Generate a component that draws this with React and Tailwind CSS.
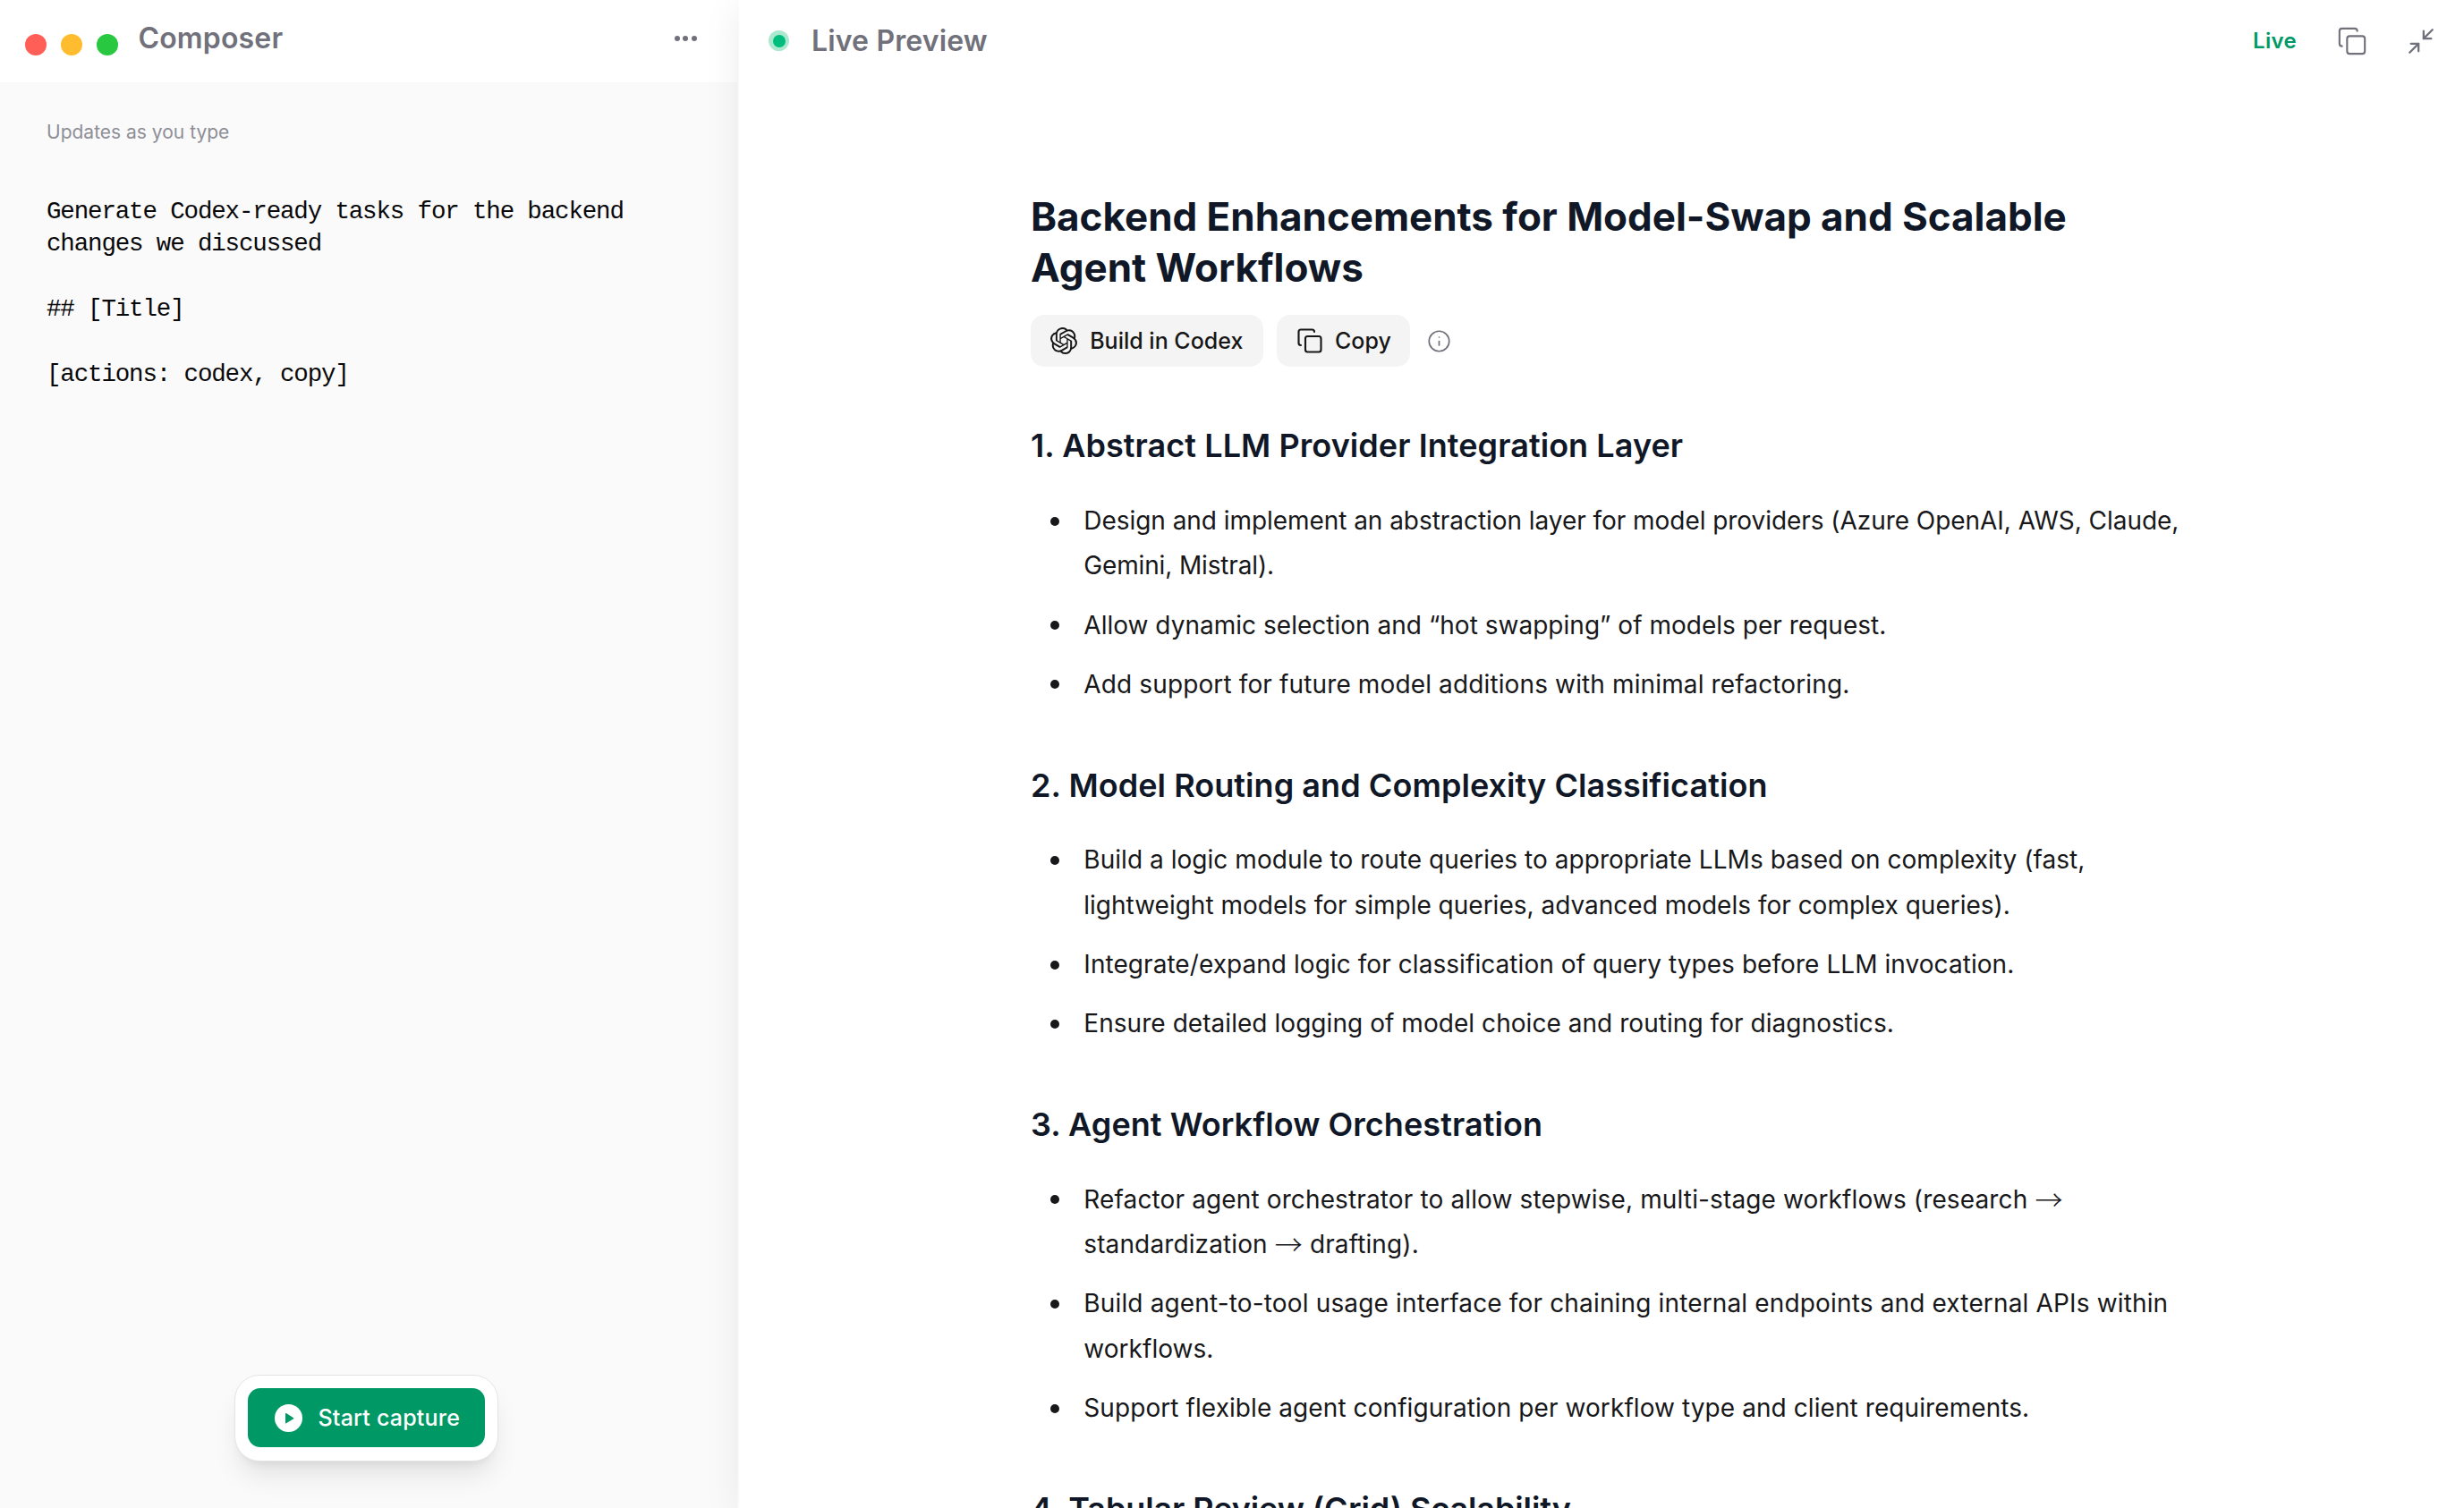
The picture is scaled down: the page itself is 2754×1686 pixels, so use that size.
// src/App.jsx
import React from 'react';
import { Copy, Info, Minimize2 } from 'lucide-react';
import { SiOpenai } from 'react-icons/si';

// Every bullet is a list of [text, tracking] lines
const sections = [
  {
    title: '1. Abstract LLM Provider Integration Layer',
    items: [
      [
        ['Design and implement an abstraction layer for model providers (Azure OpenAI, AWS, Claude,', 'tracking-[-0.05px]'],
        ['Gemini, Mistral).', 'tracking-[-0.15px]'],
      ],
      [['Allow dynamic selection and “hot swapping” of models per request.', 'tracking-[0.02px]']],
      [['Add support for future model additions with minimal refactoring.', 'tracking-[0.13px]']],
    ],
  },
  {
    title: '2. Model Routing and Complexity Classification',
    items: [
      [
        ['Build a logic module to route queries to appropriate LLMs based on complexity (fast,', 'tracking-[0.04px]'],
        ['lightweight models for simple queries, advanced models for complex queries).', 'tracking-[0px]'],
      ],
      [['Integrate/expand logic for classification of query types before LLM invocation.', 'tracking-[0.06px]']],
      [['Ensure detailed logging of model choice and routing for diagnostics.', 'tracking-[0.05px]']],
    ],
  },
  {
    title: '3. Agent Workflow Orchestration',
    items: [
      [
        ['Refactor agent orchestrator to allow stepwise, multi-stage workflows (research →', 'tracking-[0.13px]'],
        ['standardization → drafting).', 'tracking-[0.12px]'],
      ],
      [
        ['Build agent-to-tool usage interface for chaining internal endpoints and external APIs within', 'tracking-[0.15px]'],
        ['workflows.', 'tracking-[0.04px]'],
      ],
      [['Support flexible agent configuration per workflow type and client requirements.', 'tracking-[0.08px]']],
    ],
  },
  {
    title: '4. Tabular Review (Grid) Scalability',
    tracking: 'tracking-[-0.1px]',
    items: [],
  },
];

const prompt = `Generate Codex-ready tasks for the backend
changes we discussed

## [Title]

[actions: codex, copy]`;

const Line = ({ text, tracking }) => (
  <span className={`block whitespace-nowrap ${tracking}`}>
    {text.split(/(→)/).map((part, i) =>
      part === '→' ? (
        <span key={i} className="relative top-[2px] font-['Noto_Sans_CJK_SC',sans-serif] text-[31px] leading-none font-light">→</span>
      ) : (
        part
      )
    )}
  </span>
);

const Section = ({ title, tracking = 'tracking-[0.06px]', items }) => (
  <section className="mt-[64.6px]">
    <h2 className={`text-[36px] leading-[46px] font-semibold text-[#101828] whitespace-nowrap ${tracking}`}>{title}</h2>
    <ul className="mt-[35.6px] flex flex-col gap-[15.8px]">
      {items.map((lines) => (
        <li key={lines[0][0]} className="flex pl-[22px] text-[28px] leading-[50.4px] text-[#18181b]">
          <span className="mt-[20.6px] mr-[27.3px] size-[10px] shrink-0 rounded-full bg-[#18181b]" />
          <div>
            {lines.map(([text, t]) => (
              <Line key={text} text={text} tracking={t} />
            ))}
          </div>
        </li>
      ))}
    </ul>
  </section>
);

const Composer = () => (
  <aside className="flex w-[824px] shrink-0 flex-col bg-[#fafafa]">
    {/* Title bar */}
    <header className="flex h-[92px] shrink-0 items-center bg-white pb-[7px] pl-7 pr-[45px]">
      <div className="mt-[15px] flex gap-4">
        <span className="size-6 rounded-full bg-[#ff5f57]" />
        <span className="size-6 rounded-full bg-[#febc2e]" />
        <span className="size-6 rounded-full bg-[#28c840]" />
      </div>
      <h1 className="ml-[22.5px] text-[32px] leading-10 font-semibold tracking-[0.15px] text-[#71717b]">Composer</h1>
      <button type="button" className="ml-auto flex gap-[3.6px]">
        <span className="size-1.5 rounded-full bg-[#71717b]" />
        <span className="size-1.5 rounded-full bg-[#71717b]" />
        <span className="size-1.5 rounded-full bg-[#71717b]" />
      </button>
    </header>

    {/* Prompt */}
    <div className="pl-[52px] pt-[41px]">
      <p className="text-[21px] leading-[30px] text-[#8e8e97]">Updates as you type</p>
      <pre className="mt-[55.7px] font-['Liberation_Mono',monospace] text-[27.5px] leading-[36.55px] tracking-[-1.15px] text-[#09090b]">{prompt}</pre>
    </div>

    {/* Capture button */}
    <div className="mb-[52px] ml-[262px] mt-auto flex h-[97px] w-[295px] items-start justify-center rounded-[28px] border border-[#e4e4e7] bg-white pt-[14px] shadow-[0_20px_30px_-6px_rgba(0,0,0,0.1),0_8px_12px_-8px_rgba(0,0,0,0.1)]">
      <button type="button" className="flex h-[66px] w-[265px] items-center rounded-[14px] bg-[#009966] pl-[30px] text-white">
        <svg viewBox="0 0 31 31" className="size-[31px] shrink-0">
          <circle cx="15.5" cy="15.5" r="15.5" fill="currentColor" />
          <path d="M12.6 10.6v10.2l8.2-5.1z" fill="#009966" stroke="#009966" strokeWidth="1.2" strokeLinejoin="round" />
        </svg>
        <span className="ml-[17.5px] whitespace-nowrap text-[25px] leading-8 font-medium tracking-[0.2px]">Start capture</span>
      </button>
    </div>
  </aside>
);

const Preview = () => (
  <main className="relative ml-0.5 min-w-0 flex-1 bg-white shadow-[0_8px_40px_rgba(0,0,0,0.08)]">
    <header className="flex h-[91px] items-center pl-[33px] pr-[31.5px] text-[#71717b]">
      <span className="flex size-[23px] items-center justify-center rounded-full bg-[#aae9d0]">
        <span className="size-[14px] rounded-full bg-[#00bc7d]" />
      </span>
      <h1 className="ml-[25px] text-[32px] leading-10 font-semibold tracking-[0.15px]">Live Preview</h1>
      <span className="ml-auto text-[24px] leading-8 font-semibold tracking-[0.3px] text-[#009966]">Live</span>
      <Copy className="ml-[45px] size-[34px]" strokeWidth={1.5} />
      <Minimize2 className="ml-[42.5px] size-[34px]" strokeWidth={1.6} />
    </header>

    <article className="pl-[326px] pt-[122.5px]">
      <h1 className="text-[44px] leading-[57.6px] font-bold tracking-[-0.03px] text-[#101828]">
        Backend Enhancements for Model-Swap and Scalable
        <br />
        Agent Workflows
      </h1>
      <div className="mt-[23.8px] mb-[65.6px] flex h-[57.4px] items-center text-[25px] font-medium text-[#171717]">
        <button type="button" className="flex h-full w-[260px] items-center rounded-[15px] bg-[#f4f4f4] pl-[21.7px]">
          <SiOpenai className="size-[30px] shrink-0" />
          <span className="ml-[14.5px] mt-[2px] whitespace-nowrap">Build in Codex</span>
        </button>
        <button type="button" className="ml-[15px] flex h-full w-[149px] items-center rounded-[15px] bg-[#f4f4f4] pl-[21.5px]">
          <Copy className="size-[30px] shrink-0" strokeWidth={1.7} />
          <span className="ml-[13.5px] mt-[2px]">Copy</span>
        </button>
        <Info className="ml-[19.3px] size-[27px] text-[#71717b]" strokeWidth={1.5} />
      </div>
      {sections.map((s) => (
        <Section key={s.title} {...s} />
      ))}
    </article>
  </main>
);

export default function App() {
  return (
    <div className="flex h-screen overflow-hidden bg-white font-['Inter',sans-serif]">
      <Composer />
      <Preview />
    </div>
  );
}
